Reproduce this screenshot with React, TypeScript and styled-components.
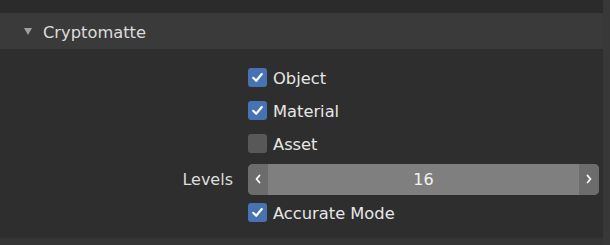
import styled, { createGlobalStyle } from "styled-components"

const GlobalStyle = createGlobalStyle`
  html, body {
    margin: 0;
    padding: 0;
    background: #2e2e2e;
  }
  body {
    font-family: "DejaVu Sans", "Liberation Sans", sans-serif;
    font-size: 16px;
    color: #e0e0e0;
  }
`

type CheckProps = {
  checked?: boolean
}

const Check = ({ checked }: CheckProps) => (
  <CheckBox $checked={checked}>
    {checked && (
      <svg width="13" height="13" viewBox="0 0 13 13">
        <path d="M2.2 6.8 L5.2 9.8 L10.8 3" fill="none" stroke="#fff" strokeWidth="2.2" strokeLinecap="round" strokeLinejoin="round" />
      </svg>
    )}
  </CheckBox>
)

const Chevron = ({ dir }: { dir: "left" | "right" }) => (
  <svg width="8" height="10" viewBox="0 0 8 10">
    <path
      d={dir === "left" ? "M5.5 1.5 L2.5 5 L5.5 8.5" : "M2.5 1.5 L5.5 5 L2.5 8.5"}
      fill="none"
      stroke="#fff"
      strokeWidth="1.8"
      strokeLinecap="round"
      strokeLinejoin="round"
    />
  </svg>
)

const rows = [
  { label: "Object", checked: true },
  { label: "Material", checked: true },
  { label: "Asset", checked: false },
]

const App = () => {
  return (
    <Page>
      <GlobalStyle />
      <Main>
        <TopBand />
        <PanelHeader>
          <Triangle />
          <span>Cryptomatte</span>
        </PanelHeader>
        <PanelBody>
          {rows.map((r) => (
            <Row key={r.label}>
              <Label />
              <CheckItem>
                <Check checked={r.checked} />
                <span>{r.label}</span>
              </CheckItem>
            </Row>
          ))}
          <Row $tall>
            <Label>Levels</Label>
            <Slider>
              <Arrow><Chevron dir="left" /></Arrow>
              <SliderValue>16</SliderValue>
              <Arrow><Chevron dir="right" /></Arrow>
            </Slider>
          </Row>
          <Row>
            <Label />
            <CheckItem>
              <Check checked />
              <span>Accurate Mode</span>
            </CheckItem>
          </Row>
        </PanelBody>
        <BottomBand />
      </Main>
      <ScrollStrip />
    </Page>
  )
}

export default App

const Page = styled.div`
  display: flex;
  width: 610px;
  height: 245px;
  overflow: hidden;
  background: #2e2e2e;
`

const Main = styled.div`
  width: 603px;
  display: flex;
  flex-direction: column;
`

const ScrollStrip = styled.div`
  width: 7px;
  background: #383838;
`

const TopBand = styled.div`
  height: 13px;
  background: #2b2b2b;
`

const PanelHeader = styled.div`
  height: 36px;
  box-sizing: border-box;
  padding: 3px 0 0 24px;
  background: #3a3a3a;
  display: flex;
  align-items: center;
  gap: 11px;
  color: #dcdcdc;
  font-size: 16.3px;
`

const Triangle = styled.div`
  width: 0;
  height: 0;
  border-left: 4.5px solid transparent;
  border-right: 4.5px solid transparent;
  border-top: 7px solid #a0a0a0;
  margin-top: -2px;
`

const PanelBody = styled.div`
  padding: 12px 0 9px;
  display: flex;
  flex-direction: column;
`

const Row = styled.div<{ $tall?: boolean }>`
  height: ${(p) => (p.$tall ? "36px" : "33px")};
  box-sizing: border-box;
  padding-top: ${(p) => (p.$tall ? "2px" : "0")};
  display: grid;
  grid-template-columns: 233px 1fr;
  column-gap: 15px;
  align-items: center;
  padding-right: 4px;
`

const Label = styled.div`
  text-align: right;
  color: #dcdcdc;
  padding-top: 1px;
`

const CheckItem = styled.div`
  display: flex;
  align-items: center;
  gap: 6px;
  color: #e6e6e6;
  font-size: 16.3px;

  span {
    padding-top: 1px;
  }
`

const CheckBox = styled.div<{ $checked?: boolean }>`
  width: 19px;
  height: 19px;
  border-radius: 3px;
  background: ${(p) => (p.$checked ? "#4772b3" : "#585858")};
  display: flex;
  align-items: center;
  justify-content: center;
`

const Slider = styled.div`
  height: 31px;
  display: flex;
  background: #7f7f7f;
  border-radius: 5px;
  overflow: hidden;
`

const Arrow = styled.div`
  width: 20px;
  background: #6c6c6c;
  display: flex;
  align-items: center;
  justify-content: center;
`

const SliderValue = styled.div`
  flex: 1;
  display: flex;
  align-items: center;
  justify-content: center;
  color: #f2f2f2;
  padding-top: 1px;
`

const BottomBand = styled.div`
  flex: 1;
  background: #353535;
`
